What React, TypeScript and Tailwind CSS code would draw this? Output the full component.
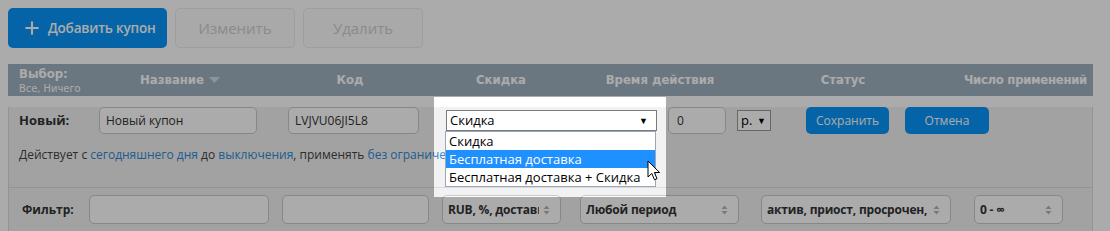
import { Plus } from 'lucide-react';

const BODY = "font-['Open_Sans','Noto_Sans',sans-serif]";
const NARROW = "font-['Liberation_Sans_Narrow','DejaVu_Sans_Condensed',sans-serif]";

function UpDown() {
  return (
    <svg width="7" height="10" viewBox="0 0 7 10" className="shrink-0">
      <path d="M3.5 0.5 L6.5 4 H0.5 Z" fill="#b5b5b5" />
      <path d="M3.5 9.5 L6.5 6 H0.5 Z" fill="#b5b5b5" />
    </svg>
  );
}

function FilterSelect({ label, width, left }: { label: string; width: string; left: string }) {
  return (
    <div
      className={`${left} ${width} flex h-[29px] items-center gap-[4px] rounded-[5px] border border-[#c9c9c9] bg-white pl-[5px] pr-[10px]`}
    >
      <span className="min-w-0 flex-1 overflow-hidden whitespace-nowrap text-[12px] font-bold tracking-[-0.2px] text-[#333]">
        {label}
      </span>
      <UpDown />
    </div>
  );
}

function Cursor() {
  return (
    <svg width="14" height="22" viewBox="0 0 14 22" className="absolute left-[647px] top-[160px] z-30">
      <path
        d="M1 1 L1 17 L4.8 13.4 L7.5 19.8 L10 18.7 L7.4 12.5 L12.6 12.5 Z"
        fill="#fff"
        stroke="#000"
        strokeWidth="1"
        strokeLinejoin="round"
      />
    </svg>
  );
}

export default function App() {
  const headers = [
    { label: 'Название', w: 'w-[164px]', arrow: true },
    { label: 'Код', w: 'w-[176px]' },
    { label: 'Скидка', w: 'w-[126px]' },
    { label: 'Время действия', w: 'w-[192px]' },
    { label: 'Статус', w: 'w-[174px]' },
  ];

  return (
    <div className={`relative h-[231px] w-[1110px] overflow-hidden bg-white ${BODY}`}>
      {/* toolbar */}
      <div className="flex gap-2 px-2 pt-2">
        <button
          type="button"
          className="flex h-10 w-[159px] items-center gap-[6px] rounded-[5px] bg-[#0796fa] pl-[14px] text-[13.5px] font-semibold tracking-[-0.2px] text-white"
        >
          <Plus size={20} strokeWidth={2.5} />
          Добавить купон
        </button>
        <button
          type="button"
          className="h-10 w-[120px] rounded-[5px] border border-[#ececec] bg-[#fcfcfc] text-[15px] text-[#cfcfcf]"
        >
          Изменить
        </button>
        <button
          type="button"
          className="h-10 w-[120px] rounded-[5px] border border-[#ececec] bg-[#fcfcfc] text-[15px] text-[#cfcfcf]"
        >
          Удалить
        </button>
      </div>

      {/* table */}
      <div className="mx-2 mt-4 w-[1085px]">
        <div className={`flex h-8 items-center bg-[#a0b2bf] text-white ${NARROW}`}>
          <div className="w-[90px] pl-[11px] leading-none">
            <div className="text-[13px] font-bold">Выбор:</div>
            <div className="mt-[3px] text-[11px]">Все, Ничего</div>
          </div>
          {headers.map((h) => (
            <div key={h.label} className={`${h.w} flex items-center justify-center gap-[5px] text-[13px] font-bold`}>
              {h.label}
              {h.arrow && (
                <svg width="11" height="6" viewBox="0 0 11 6">
                  <path d="M0 0 H11 L5.5 6 Z" fill="#d3dde4" />
                </svg>
              )}
            </div>
          ))}
          <div className="flex-1 pr-[6px] text-right text-[13px] font-bold tracking-[-0.3px]">Число применений</div>
        </div>

        {/* new coupon row */}
        <div className="h-[81px] border-x border-b border-[#dcdcdc] bg-[#f2f2f2]">
          <div className="mt-[11px] flex h-[27px] items-center">
            <span className="ml-[10px] w-[80px] text-[13px] font-bold text-[#333]">Новый:</span>
            <div className="flex h-[27px] w-[158px] items-center rounded-[5px] border border-[#c9c9c9] bg-white px-[6px] text-[12px] text-[#333]">
              Новый купон
            </div>
            <div className="ml-[31px] flex h-[27px] w-[131px] items-center rounded-[5px] border border-[#c9c9c9] bg-white px-[6px] text-[12px] text-[#333]">
              LVJVU06JI5L8
            </div>
            <div className="relative z-20 ml-[27px] flex h-[21px] w-[211px] items-center justify-between border border-[#7a7a7a] bg-white pl-[3px] pr-[8px] text-[13px] text-black">
              Скидка
              <span className="text-[9px]">▼</span>
            </div>
            <div className="ml-[11px] flex h-[27px] w-[58px] items-center rounded-[5px] border border-[#c9c9c9] bg-white px-[8px] text-[12px] text-[#333]">
              0
            </div>
            <div className="ml-[11px] flex h-[21px] w-[34px] items-center justify-between border border-[#9a9a9a] bg-white pl-[3px] pr-[4px] text-[13px] text-black">
              р.
              <span className="text-[9px]">▼</span>
            </div>
            <button
              type="button"
              className="ml-[35px] h-[27px] w-[83px] rounded-[5px] bg-[#0796fa] text-[12px] text-white"
            >
              Сохранить
            </button>
            <button
              type="button"
              className="ml-4 h-[27px] w-[84px] rounded-[5px] bg-[#0796fa] text-[12px] text-white"
            >
              Отмена
            </button>
          </div>
          <div className="ml-[10px] mt-[12px] whitespace-nowrap text-[12px] text-[#444]">
            Действует с <span className="text-[#2e8ad6]">сегодняшнего дня</span> до{' '}
            <span className="text-[#2e8ad6]">выключения</span>, применять{' '}
            <span className="text-[#2e8ad6]">без ограничений</span>.
          </div>
        </div>

        {/* filter row */}
        <div className="flex h-[44px] items-center border-x border-b border-[#dcdcdc] bg-[#f2f2f2]">
          <span className="ml-[13px] w-[67px] text-[12px] font-bold text-[#333]">Фильтр:</span>
          <div className="h-[29px] w-[180px] rounded-[5px] border border-[#c9c9c9] bg-white" />
          <div className="ml-[13px] h-[29px] w-[147px] rounded-[5px] border border-[#c9c9c9] bg-white" />
          <FilterSelect label="RUB, %, доставка" width="w-[119px]" left="ml-[13px]" />
          <FilterSelect label="Любой период" width="w-[159px]" left="ml-[19px]" />
          <FilterSelect label="актив, приост, просрочен, истёк" width="w-[190px]" left="ml-[22px]" />
          <FilterSelect label="0 - ∞" width="w-[89px]" left="ml-[23px]" />
        </div>
      </div>

      {/* spotlight hole */}
      <div className="pointer-events-none absolute left-[434px] top-[97px] z-10 h-[100px] w-[232px] shadow-[0_0_0_1400px_rgba(0,0,0,0.33)]" />

      {/* open dropdown list */}
      <div className="absolute left-[445px] top-[131px] z-20 w-[211px] border border-[#9aa7b8] bg-white text-[13px] leading-[18px] text-black">
        <div className="px-[3px]">Скидка</div>
        <div className="bg-[#1e90ff] px-[3px] text-white">Бесплатная доставка</div>
        <div className="px-[3px]">Бесплатная доставка + Скидка</div>
      </div>

      <Cursor />
    </div>
  );
}
